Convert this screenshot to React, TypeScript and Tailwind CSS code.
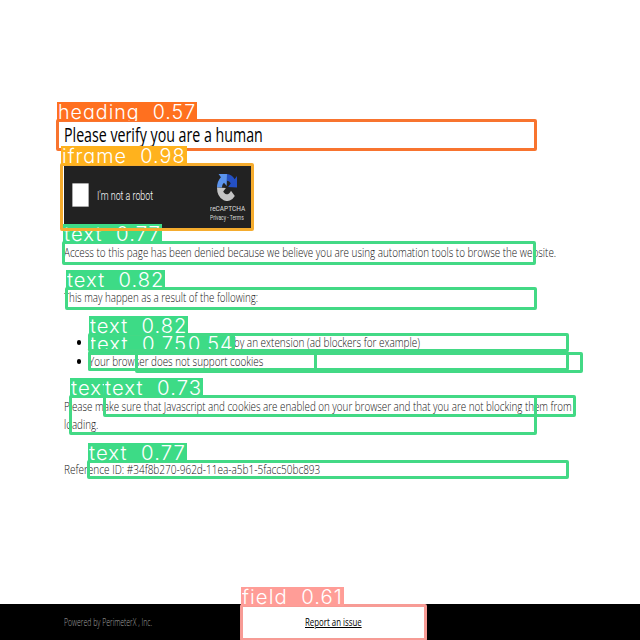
import { useLayoutEffect, useRef, useState } from "react";

/** Condenses a single line of text horizontally to the given width. */
function Line({
  width,
  className = "",
  textClass = "",
  children,
}: {
  width: number;
  className?: string;
  textClass?: string;
  children: string;
}) {
  const ref = useRef<HTMLSpanElement>(null);
  const [scale, setScale] = useState(1);
  useLayoutEffect(() => {
    const measure = () => {
      if (ref.current) setScale(width / ref.current.offsetWidth);
    };
    measure();
    document.fonts?.ready.then(measure);
  }, [width]);
  return (
    <span className={`block ${className}`} style={{ width }}>
      <span
        ref={ref}
        className={`inline-block origin-left whitespace-pre ${textClass}`}
        style={{ transform: `scaleX(${scale})` }}
      >
        {children}
      </span>
    </span>
  );
}

type Mark = {
  text?: string;
  tone: "green" | "orange" | "amber" | "pink";
  box: [number, number, number, number];
  label?: [number, number, number];
};

const tones = {
  green: { border: "border-[#43d985]", bg: "bg-[#3ddb86]" },
  orange: { border: "border-[#f8742f]", bg: "bg-[#ff701f]" },
  amber: { border: "border-[#f5ac2e]", bg: "bg-[#ffb21d]" },
  pink: { border: "border-[#f79b95]", bg: "bg-[#ff9d97]" },
};

// Boxes are [left, top, right, bottom]; labels are [left, top, width].
const marks: Mark[] = [
  { tone: "green", box: [88, 352, 317, 371] },
  { text: "text  0.54", tone: "green", box: [135, 352, 583, 373], label: [136, 334, 99] },
  { text: "heading  0.57", tone: "orange", box: [56, 119, 537, 151], label: [57, 102, 140] },
  { text: "field  0.61", tone: "pink", box: [240, 604, 427, 641], label: [241, 587, 103] },
  { text: "text  0.70", tone: "green", box: [69, 395, 537, 435], label: [70, 378, 99] },
  { text: "text  0.73", tone: "green", box: [103, 395, 576, 417], label: [104, 378, 99] },
  { text: "text  0.75", tone: "green", box: [88, 351, 569, 371], label: [89, 334, 99] },
  { text: "text  0.77", tone: "green", box: [87, 460, 569, 479], label: [88, 443, 99] },
  { text: "text  0.77", tone: "green", box: [62, 241, 536, 265], label: [63, 224, 99] },
  { text: "text  0.82", tone: "green", box: [88, 333, 569, 352], label: [89, 316, 99] },
  { text: "text  0.82", tone: "green", box: [65, 287, 537, 310], label: [66, 270, 99] },
  { text: "iframe  0.98", tone: "amber", box: [60, 163, 254, 231], label: [61, 146, 126] },
];

function Annotation({ mark }: { mark: Mark }) {
  const [l, t, r, b] = mark.box;
  const tone = tones[mark.tone];
  return (
    <>
      <div
        className={`absolute rounded-[2px] border-[3px] ${tone.border}`}
        style={{ left: l, top: t, width: r - l, height: b - t }}
      />
      {mark.label && mark.text && (
        <div
          className={`absolute h-[19px] overflow-hidden pl-px ${tone.bg}`}
          style={{ left: mark.label[0], top: mark.label[1], width: mark.label[2] }}
        >
          <Line
            width={mark.label[2] - 2}
            className="font-[Inter,sans-serif] text-[19.5px] leading-[20px] font-light tracking-[1px] text-white [font-feature-settings:'cv11'_1]"
          >
            {mark.text}
          </Line>
        </div>
      )}
    </>
  );
}

function RecaptchaLogo() {
  return (
    <svg className="h-[27px] w-[20px]" viewBox="0 0 64 64" preserveAspectRatio="none">
      <path fill="#2450c4" d="M64 32V5l-7.500 7.500A32 32 0 0 0 32 0v16c5 0 9 2 12 6.400L35.500 31 64 32z" />
      <path fill="#5b94ee" d="M32 0H5l7.500 7.500A32 32 0 0 0 0 32h16c0-5 2-8.500 6.400-11.500L31 28.500 32 0z" />
      <path fill="#c4c4c4" d="M0 32a32 32 0 0 0 57 20L44.700 39.600A16 16 0 0 1 40 45c-2 1.600-5 3-8.600 3h-1c-4.700-.300-8.300-3-10.500-6.400L28.500 33 0 32z" />
    </svg>
  );
}

export default function App() {
  return (
    <div className="relative flex h-[640px] w-[640px] flex-col overflow-hidden bg-white font-['Open_Sans',sans-serif] text-[13.5px] leading-[18px] font-light text-[#111]">
      <main className="flex grow flex-col pt-[122px] pl-16">
        <h1 className="text-[20px] leading-[26px] font-normal text-black">
          <Line width={199}>Please verify you are a human</Line>
        </h1>

        <section className="mt-[18px] flex h-[63px] w-[188px] items-center bg-[#222] text-white">
          <div className="mt-[-5px] ml-2 h-[24px] w-[17px] rounded-[1px] border border-[#aaa] bg-white" />
          <div className="mt-[-4px] ml-2 font-[Roboto,sans-serif] text-[12px] font-light">
            <Line width={56}>I'm not a robot</Line>
          </div>
          <div className="ml-auto flex h-full w-[50px] flex-col items-center pt-[8px] font-[Roboto,sans-serif] font-normal text-[#ddd]">
            <RecaptchaLogo />
            <Line width={35} className="mt-[2px] text-[8px] leading-[11px]">reCAPTCHA</Line>
            <Line width={34} className="text-[7px] leading-[8px]">Privacy - Terms</Line>
          </div>
        </section>

        <p className="mt-[14px]">
          <Line width={492}>Access to this page has been denied because we believe you are using automation tools to browse the website.</Line>
        </p>
        <p className="mt-[27px]">
          <Line width={194}>This may happen as a result of the following:</Line>
        </p>
        <ul className="mt-[27px] ml-[25px]">
          <li className="relative">
            <i className="absolute top-[7px] -left-[12px] h-[5px] w-[4px] rounded-full bg-black" />
            <Line width={331}>Javascript is disabled or blocked by an extension (ad blockers for example)</Line>
          </li>
          <li className="relative mt-px">
            <i className="absolute top-[7px] -left-[12px] h-[5px] w-[4px] rounded-full bg-black" />
            <Line width={174}>Your browser does not support cookies</Line>
          </li>
        </ul>
        <p className="mt-[27px]">
          <Line width={508}>Please make sure that Javascript and cookies are enabled on your browser and that you are not blocking them from</Line>
          <Line width={34}>loading.</Line>
        </p>
        <p className="mt-[27px]">
          <Line width={256}>Reference ID: #34f8b270-962d-11ea-a5b1-5facc50bc893</Line>
        </p>
      </main>

      <footer className="flex h-9 shrink-0 items-center bg-black pl-16 text-[10px]">
        <Line width={88} className="text-[#a0a0a0]">Powered by PerimeterX , Inc.</Line>
        <div className="ml-[89px] flex h-full w-[184px] items-center justify-center bg-white text-[11px] font-normal text-black">
          <Line width={57} textClass="underline">Report an issue</Line>
        </div>
      </footer>

      {marks.map((mark, i) => (
        <Annotation key={i} mark={mark} />
      ))}
    </div>
  );
}
